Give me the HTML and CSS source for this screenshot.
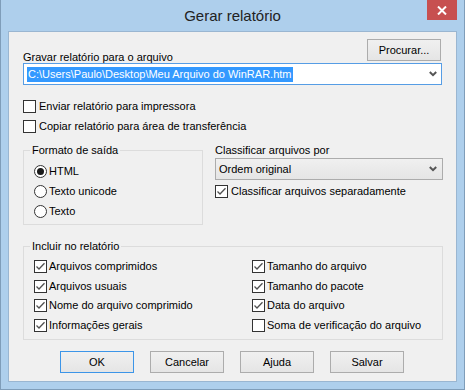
FILE: index.html
```html
<!DOCTYPE html>
<html lang="pt">
<head>
<meta charset="utf-8">
<title>Gerar relatório</title>
<link rel="stylesheet" href="styles.css">
</head>
<body>
<div class="window">
  <div class="titlebar">
    <span class="title">Gerar relatório</span>
    <span class="close"><svg width="10" height="9" viewBox="0 0 10 9"><path d="M1 0.5 L9 8.5 M9 0.5 L1 8.5" stroke="#fff" stroke-width="2"/></svg></span>
  </div>
  <div class="client">
    <div class="toprow">
      <span class="label lbl-file">Gravar relatório para o arquivo</span>
      <span class="btn btn-browse">Procurar...</span>
    </div>
    <div class="combo">
      <span class="sel">C:\Users\Paulo\Desktop\Meu Arquivo do WinRAR.htm</span>
      <svg class="chev" width="8" height="6" viewBox="0 0 8 6"><path d="M0.8 1 L4 4.2 L7.2 1" fill="none" stroke="#555" stroke-width="2"/></svg>
    </div>
    <div class="checks">
      <label class="chk"><span class="box"></span>Enviar relatório para impressora</label>
      <label class="chk"><span class="box"></span>Copiar relatório para área de transferência</label>
    </div>
    <div class="midrow">
      <fieldset class="group g-format">
        <legend>Formato de saída</legend>
        <div class="radios">
          <label class="rad"><span class="circle on"></span>HTML</label>
          <label class="rad"><span class="circle"></span>Texto unicode</label>
          <label class="rad"><span class="circle"></span>Texto</label>
        </div>
      </fieldset>
      <div class="sortcol">
        <span class="label">Classificar arquivos por</span>
        <div class="dropdown">
          <span>Ordem original</span>
          <svg class="chev" width="8" height="6" viewBox="0 0 8 6"><path d="M0.8 1 L4 4.2 L7.2 1" fill="none" stroke="#555" stroke-width="2"/></svg>
        </div>
        <label class="chk chk-sort"><span class="box checked"></span>Classificar arquivos separadamente</label>
      </div>
    </div>
    <fieldset class="group g-include">
      <legend>Incluir no relatório</legend>
      <div class="incgrid">
        <label class="chk"><span class="box checked"></span>Arquivos comprimidos</label>
        <label class="chk"><span class="box checked"></span>Tamanho do arquivo</label>
        <label class="chk"><span class="box checked"></span>Arquivos usuais</label>
        <label class="chk"><span class="box checked"></span>Tamanho do pacote</label>
        <label class="chk"><span class="box checked"></span>Nome do arquivo comprimido</label>
        <label class="chk"><span class="box checked"></span>Data do arquivo</label>
        <label class="chk"><span class="box checked"></span>Informações gerais</label>
        <label class="chk"><span class="box"></span>Soma de verificação do arquivo</label>
      </div>
    </fieldset>
    <div class="buttons">
      <span class="btn btn-default">OK</span>
      <span class="btn">Cancelar</span>
      <span class="btn">Ajuda</span>
      <span class="btn">Salvar</span>
    </div>
  </div>
</div>
</body>
</html>
```

FILE: styles.css
```css
* { box-sizing: border-box; }
html, body { margin: 0; padding: 0; background: #aed0ee; }
body { font-family: "Liberation Sans", Arial, sans-serif; font-size: 11px; color: #000; }

.window {
  width: 465px;
  height: 390px;
  background: #aecfec;
  border: 1px solid #7f9db9;
  border-top: none;
  display: flex;
  flex-direction: column;
  padding: 0 7px 7px 7px;
}

.titlebar {
  height: 31px;
  display: grid;
  grid-template-columns: 1fr auto 1fr;
  align-items: start;
}
.title {
  grid-column: 2;
  font-size: 15px;
  line-height: 17px;
  margin-top: 7px;
  color: #222;
  margin-left: 0;
}
.close {
  grid-column: 3;
  justify-self: end;
  width: 30px;
  height: 20px;
  background: #c75050;
  display: flex;
  align-items: center;
  justify-content: center;
  margin-right: 0;
}

.client {
  height: 351px;
  background: #f0f0f0;
  border: 1px solid #9ab6d1;
  padding: 7px 13px 0 14px;
  display: flex;
  flex-direction: column;
}

.label { line-height: 13px; }

.toprow {
  height: 22px;
  display: flex;
  justify-content: space-between;
  align-items: flex-end;
}
.lbl-file { margin-bottom: -3px; }

.btn {
  width: 74px;
  height: 22px;
  border: 1px solid #acacac;
  background: linear-gradient(#f0f0f0, #e5e5e5);
  display: flex;
  align-items: center;
  justify-content: center;
  line-height: 13px;
}
.btn-browse { margin-right: 2px; }
.btn-default { border-color: #3c95e8; }

.combo {
  margin-top: 2px;
  width: 419px;
  height: 22px;
  background: #fff;
  border: 1px solid #569de5;
  display: flex;
  align-items: center;
  justify-content: space-between;
  padding: 0 4px 0 3px;
}
.sel {
  background: #3399ff;
  color: #fff;
  line-height: 15px;
  padding: 0 1px;
}
.chev { display: block; }

.checks {
  margin-top: 11px;
  display: flex;
  flex-direction: column;
}
.chk {
  height: 20px;
  display: flex;
  align-items: center;
  white-space: nowrap;
  line-height: 13px;
}
.box {
  width: 13px;
  height: 13px;
  border: 1px solid #333;
  background: #fff;
  margin-right: 3px;
  flex: none;
}
.box.checked {
  background: #fff url("data:image/svg+xml;utf8,<svg xmlns='http://www.w3.org/2000/svg' width='11' height='11' viewBox='0 0 11 11'><path d='M1.5 5.5 L4 8 L9.5 2.2' fill='none' stroke='%23505050' stroke-width='1.3'/></svg>") no-repeat center;
}

.midrow {
  margin-top: 8px;
  display: flex;
  align-items: flex-start;
}

.group {
  margin: 0;
  border: 1px solid #dcdcdc;
  padding: 0 0 0 6px;
  min-width: 0;
}
.group legend {
  padding: 0 2px;
  line-height: 13px;
}

.g-format { width: 180px; }
.radios {
  padding: 4px 0 3px 4px;
  display: flex;
  flex-direction: column;
}
.rad {
  height: 20px;
  display: flex;
  align-items: center;
  line-height: 13px;
}
.circle {
  width: 13px;
  height: 13px;
  border: 1px solid #333;
  border-radius: 50%;
  background: #fff;
  margin-right: 2px;
  display: flex;
  align-items: center;
  justify-content: center;
  flex: none;
}
.circle.on::after {
  content: "";
  width: 7px;
  height: 7px;
  border-radius: 50%;
  background: #1a1a1a;
}

.sortcol {
  margin-left: 12px;
  width: 228px;
  display: flex;
  flex-direction: column;
}
.dropdown {
  margin-top: 1px;
  height: 22px;
  border: 1px solid #acacac;
  background: linear-gradient(#f0f0f0, #e5e5e5);
  display: flex;
  align-items: center;
  justify-content: space-between;
  padding: 0 5px 0 3px;
}
.chk-sort { margin-top: 1px; }

.g-include {
  margin-top: 15px;
  width: 420px;
}
.incgrid {
  padding: 4px 0 4px 4px;
  display: grid;
  grid-template-columns: 218px auto;
  grid-auto-rows: 19.5px;
}
.incgrid .chk { height: 19.5px; }
.incgrid .box { margin-right: 2px; }

.buttons {
  margin-top: 11px;
  display: flex;
  justify-content: center;
  gap: 16px;
  padding-right: 2px;
}
```
